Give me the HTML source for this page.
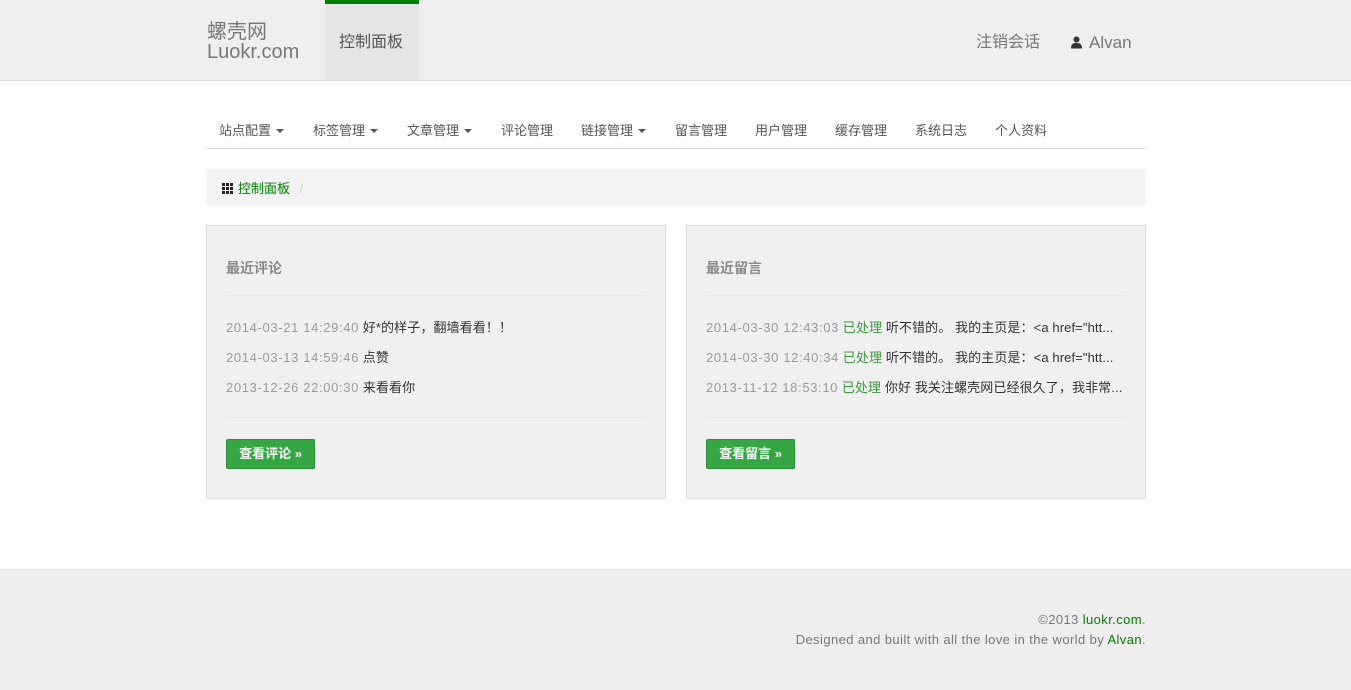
<!DOCTYPE html>
<html><head><meta charset="utf-8">
<style>
*{margin:0;padding:0;box-sizing:border-box}
body{width:1351px;height:690px;position:relative;background:#fff;font-family:"Liberation Sans","Noto Sans CJK SC",sans-serif;overflow:hidden;color:#333}
.a{position:absolute;white-space:nowrap}
.hdr{position:absolute;left:0;top:0;width:1351px;height:81px;background:#efefef;border-bottom:1px solid #ddd}
.g{color:#008000}
.sub{top:120px;font-size:13px;color:#555}
.car{display:inline-block;width:0;height:0;border-left:4px solid transparent;border-right:4px solid transparent;border-top:4px solid #555;vertical-align:middle;margin-left:5px;margin-top:-2px}
.panel{position:absolute;top:225px;width:460px;height:274px;background:#f0f0f0;border:1px solid #ddd}
.panel .t{position:absolute;left:19px;top:32px;font-size:14px;font-weight:bold;color:#888}
.panel .hr{position:absolute;left:19px;width:420px;height:1px;background:#fff;border-top:1px solid #e6e6e6}
.panel .l{position:absolute;left:19px;font-size:13px;color:#333;white-space:nowrap;letter-spacing:0.1px}
.panel .l span.d{color:#999;letter-spacing:0.65px}
.panel .l span.s{color:#3a9a3a}
.btn{position:absolute;left:19px;top:213px;width:89px;height:30px;background:#34a744;border:1px solid #2a8f38;border-radius:2px;color:#fff;font-size:13px;font-weight:bold;text-align:center;line-height:28px}
.ft{position:absolute;left:0;top:569px;width:1351px;height:121px;background:#eee;border-top:1px solid #ddd}
.ft .r{position:absolute;right:205px;font-size:13px;color:#777;text-align:right;letter-spacing:0.4px}
.hn{top:32px;font-size:16px;line-height:22px}
</style></head><body>
<div class="hdr"></div>
<div class="a" style="left:207px;top:22px;font-size:20px;line-height:20px;color:#777">螺壳网<br>Luokr.com</div>
<div class="a" style="left:325px;top:0;width:94px;height:80px;background:#e5e5e5;border-top:4px solid #008000"></div>
<div class="a hn" style="left:339px;color:#555">控制面板</div>
<div class="a hn" style="left:976px;color:#777">注销会话</div>
<div class="a hn" style="left:1070px;color:#777;font-size:17px"><svg width="13" height="13" viewBox="0 0 13 13" style="vertical-align:-1px;margin-right:6px"><circle cx="6.5" cy="3.5" r="3" fill="#333"/><path d="M1 12.5 C1 8 3 7 6.5 7 C10 7 12 8 12 12.5Z" fill="#333"/></svg>Alvan</div>

<div class="a sub" style="left:219px">站点配置<span class="car"></span></div>
<div class="a sub" style="left:313px">标签管理<span class="car"></span></div>
<div class="a sub" style="left:407px">文章管理<span class="car"></span></div>
<div class="a sub" style="left:501px">评论管理</div>
<div class="a sub" style="left:581px">链接管理<span class="car"></span></div>
<div class="a sub" style="left:675px">留言管理</div>
<div class="a sub" style="left:755px">用户管理</div>
<div class="a sub" style="left:835px">缓存管理</div>
<div class="a sub" style="left:915px">系统日志</div>
<div class="a sub" style="left:995px">个人资料</div>
<div class="a" style="left:206px;top:148px;width:940px;height:1px;background:#ddd"></div>

<div class="a" style="left:206px;top:169px;width:940px;height:36px;background:#f3f3f3"></div>
<div class="a" style="left:222px;top:178px;font-size:13px"><svg width="11" height="11" viewBox="0 0 11 11" style="vertical-align:-1px;margin-right:5px"><g fill="#222"><rect x="0" y="0" width="3" height="3"/><rect x="4" y="0" width="3" height="3"/><rect x="8" y="0" width="3" height="3"/><rect x="0" y="4" width="3" height="3"/><rect x="4" y="4" width="3" height="3"/><rect x="8" y="4" width="3" height="3"/><rect x="0" y="8" width="3" height="3"/><rect x="4" y="8" width="3" height="3"/><rect x="8" y="8" width="3" height="3"/></g></svg><span class="g">控制面板</span> <span style="color:#ccc;margin-left:6px">/</span></div>

<div class="panel" style="left:206px">
<div class="t">最近评论</div>
<div class="hr" style="top:69px"></div>
<div class="l" style="top:91px"><span class="d">2014-03-21 14:29:40</span> 好*的样子，翻墙看看！！</div>
<div class="l" style="top:121px"><span class="d">2014-03-13 14:59:46</span> 点赞</div>
<div class="l" style="top:151px"><span class="d">2013-12-26 22:00:30</span> 来看看你</div>
<div class="hr" style="top:191px"></div>
<div class="btn">查看评论 »</div>
</div>

<div class="panel" style="left:686px">
<div class="t">最近留言</div>
<div class="hr" style="top:69px"></div>
<div class="l" style="top:91px"><span class="d">2014-03-30 12:43:03</span> <span class="s">已处理</span> 听不错的。 我的主页是：&lt;a href="htt...</div>
<div class="l" style="top:121px"><span class="d">2014-03-30 12:40:34</span> <span class="s">已处理</span> 听不错的。 我的主页是：&lt;a href="htt...</div>
<div class="l" style="top:151px"><span class="d">2013-11-12 18:53:10</span> <span class="s">已处理</span> 你好 我关注螺壳网已经很久了，我非常...</div>
<div class="hr" style="top:191px"></div>
<div class="btn">查看留言 »</div>
</div>

<div class="ft">
<div class="r" style="top:42px">©2013 <span class="g">luokr.com</span>.</div>
<div class="r" style="top:62px">Designed and built with all the love in the world by <span class="g">Alvan</span>.</div>
</div>
</body></html>
